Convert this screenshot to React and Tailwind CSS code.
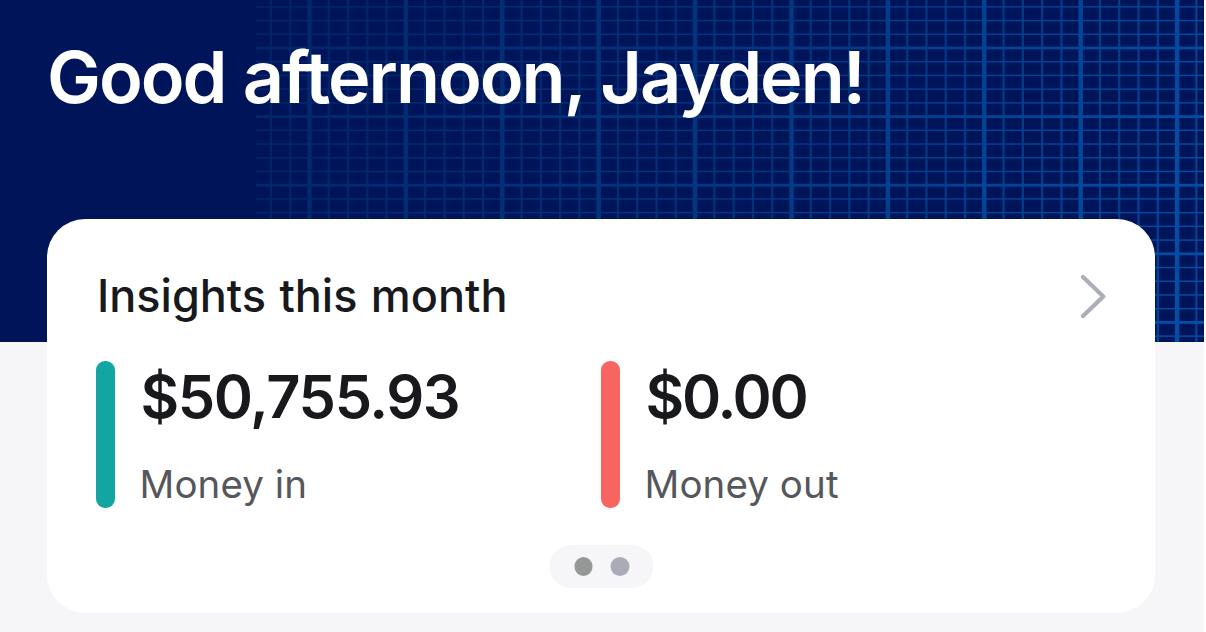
import React from 'react';

const MINOR_X = 19.28;
const MINOR_Y = 13.72;

const range = (count) => Array.from({ length: count }, (_, i) => i);

// Blueprint grid that fades out towards the left side of the banner
const GridPattern = () => (
  <svg className="absolute inset-0 w-full h-full" viewBox="0 0 1204 342" preserveAspectRatio="none" aria-hidden="true">
    <defs>
      <linearGradient id="gridInk" gradientUnits="userSpaceOnUse" x1="256" y1="60" x2="1204" y2="342">
        <stop offset="0" stopColor="#02266b" />
        <stop offset="0.5" stopColor="#023882" />
        <stop offset="1" stopColor="#0350a8" />
      </linearGradient>
    </defs>
    <g fill="url(#gridInk)">
      {range(49).map((i) => {
        const major = i % 5 === 2;
        const w = major ? 4.4 : 2.2;
        return <rect key={i} x={270.94 + i * MINOR_X - w / 2} y="0" width={w} height="342" opacity={major ? 1 : 0.8} />;
      })}
      {range(25).map((i) => {
        const major = i % 5 === 3;
        const h = major ? 2.8 : 1.4;
        return <rect key={i} x="256" y={6.84 + i * MINOR_Y - h / 2} width="948" height={h} />;
      })}
    </g>
  </svg>
);

const ChevronRight = () => (
  <svg className="w-[26px] h-[44px] -mt-[2px]" viewBox="0 0 26 44" fill="none" aria-hidden="true">
    <path d="M3 3 L23.3 22.5 L3 42" stroke="#abadb8" strokeWidth="4.2" strokeLinecap="round" strokeLinejoin="round" />
  </svg>
);

const Stat = ({ amount, label, barClass, amountClass }) => (
  <div className="flex w-[505.5px] h-[147px]">
    <span className={`w-[19px] h-full rounded-[9px] shrink-0 ${barClass}`} />
    <div className="pl-[25.5px] whitespace-nowrap">
      <p className={`-mt-[1px] text-[59.5px] leading-[72px] font-semibold text-[#18191d] ${amountClass}`}>{amount}</p>
      <p className="mt-[28px] -ml-[1px] text-[38.5px] leading-[48px] tracking-[0.1px] text-[#55575c]">{label}</p>
    </div>
  </div>
);

const stats = [
  { label: 'Money in', amount: '$50,755.93', barClass: 'bg-[#13a5a2]', amountClass: 'tracking-[-1.4px]' },
  { label: 'Money out', amount: '$0.00', barClass: 'bg-[#f86460]', amountClass: 'tracking-[-2.2px]' },
];

const InsightsCard = () => (
  <section className="relative w-[1108px] h-[394px] ml-[47px] -mt-[123px] rounded-[38px] bg-white pt-[54px] px-[49px]">
    <div className="flex items-center justify-between h-[48px]">
      <h2 className="-mt-[2px] ml-[1px] text-[45px] leading-[48px] font-medium [word-spacing:1.4px] text-[#18191d]">Insights this month</h2>
      <ChevronRight />
    </div>
    <div className="flex mt-[40px]">
      {stats.map((stat) => (
        <Stat key={stat.label} {...stat} />
      ))}
    </div>
    <div className="mt-[37px]">
      <div className="flex items-center justify-center gap-[18px] w-[104px] h-[43px] mx-auto rounded-full bg-[#f6f6f9] translate-x-[0.5px]">
        <span className="w-[18.5px] h-[18.5px] rounded-full bg-[#969797]" />
        <span className="w-[18.5px] h-[18.5px] rounded-full bg-[#a9abb8]" />
      </div>
    </div>
  </section>
);

const App = () => (
  <main className="w-[1206px] h-[632px] overflow-hidden bg-white font-['Inter',sans-serif]">
    <div className="w-[1204px] h-full bg-[#f6f6f9]">
      <header className="relative h-[342px] bg-[#001459]">
        <GridPattern />
        <h1 className="relative pl-[47px] pt-[33px] text-[72px] leading-[88px] font-semibold tracking-[-2px] [word-spacing:1px] text-white whitespace-nowrap">
          Good afternoon, Jayden!
        </h1>
      </header>
      <InsightsCard />
    </div>
  </main>
);

export default App;
